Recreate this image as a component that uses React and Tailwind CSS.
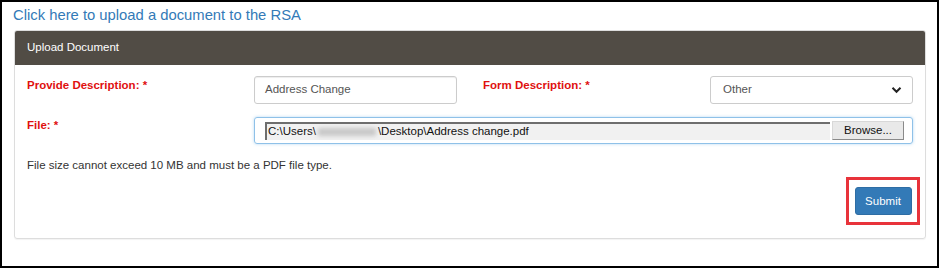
export default function App() {
  return (
    <div className="w-[939px] h-[268px] bg-white border-2 border-black font-['Liberation_Sans',Arial,sans-serif] text-[11.5px] text-[#333] overflow-hidden">
      {/* Page title link */}
      <div className="pl-[11px] pt-[3px] h-[28px]">
        <a href="#" className="text-[14.8px] text-[#337ab7] leading-[20px]">
          Click here to upload a document to the RSA
        </a>
      </div>

      {/* Panel */}
      <div className="ml-[12px] w-[912px] h-[209px] border border-[#ddd] rounded-[3px] shadow-[0_1px_1px_rgba(0,0,0,0.05)]">
        <div className="h-[34px] bg-[#514c45] rounded-t-[2px] flex items-center px-[12px] text-white">
          Upload Document
        </div>

        <div className="px-[12px] pt-[11px]">
          {/* Row 1 */}
          <div className="flex">
            <label className="w-[227px] pt-[1px] font-bold text-[#e0100f]">Provide Description: *</label>
            <div className="w-[203px] h-[28px] border border-[#ccc] rounded-[3px] flex items-center px-[10px] text-[#555] shadow-[inset_0_1px_1px_rgba(0,0,0,0.075)]">
              Address Change
            </div>
            <label className="ml-[26px] w-[227px] pt-[1px] font-bold text-[#e0100f]">Form Description: *</label>
            <div className="w-[203px] h-[28px] border border-[#ccc] rounded-[3px] flex items-center justify-between pl-[12px] pr-[10px] text-[#555]">
              <span>Other</span>
              <svg width="11" height="8" viewBox="0 0 11 8" fill="none">
                <path d="M1.5 1.8 L5.5 5.8 L9.5 1.8" stroke="#222" strokeWidth="2" />
              </svg>
            </div>
          </div>

          {/* Row 2 */}
          <div className="flex mt-[13px]">
            <label className="w-[227px] font-bold text-[#e0100f]">File: *</label>
            <div className="w-[659px] h-[27px] border border-[#8fc1e8] rounded-[3px] flex items-center pl-[10px] pr-[8px] shadow-[0_0_3px_rgba(102,175,233,0.5)]">
              <div className="flex-1 h-[18px] bg-[#f1f1f1] border-t-2 border-l-2 border-[#6e6e6e] flex items-center pl-[1px] text-[#111] leading-none whitespace-nowrap overflow-hidden">
                C:\Users\
                <span className="mx-[2px] w-[58px] h-[8px] bg-[#c8c8c8] blur-[2px] inline-block"></span>
                \Desktop\Address change.pdf
              </div>
              <div className="ml-[2px] w-[72px] h-[19px] bg-[#e9e9e9] border border-[#d8d8d8] border-r-[#8a8a8a] border-b-[#8a8a8a] flex items-center justify-center text-[#111]">
                Browse...
              </div>
            </div>
          </div>

          <p className="mt-[13px]">File size cannot exceed 10 MB and must be a PDF file type.</p>

          {/* Submit */}
          <div className="flex justify-end mt-[3px] -mr-[7px]">
            <div className="w-[74px] h-[48px] border-[3px] border-[#e8333b] flex items-center justify-center">
              <button className="w-[57px] h-[28px] bg-[#337ab7] border border-[#2e6da4] rounded-[3px] text-white text-[11.5px]">
                Submit
              </button>
            </div>
          </div>
        </div>
      </div>
    </div>
  )
}
